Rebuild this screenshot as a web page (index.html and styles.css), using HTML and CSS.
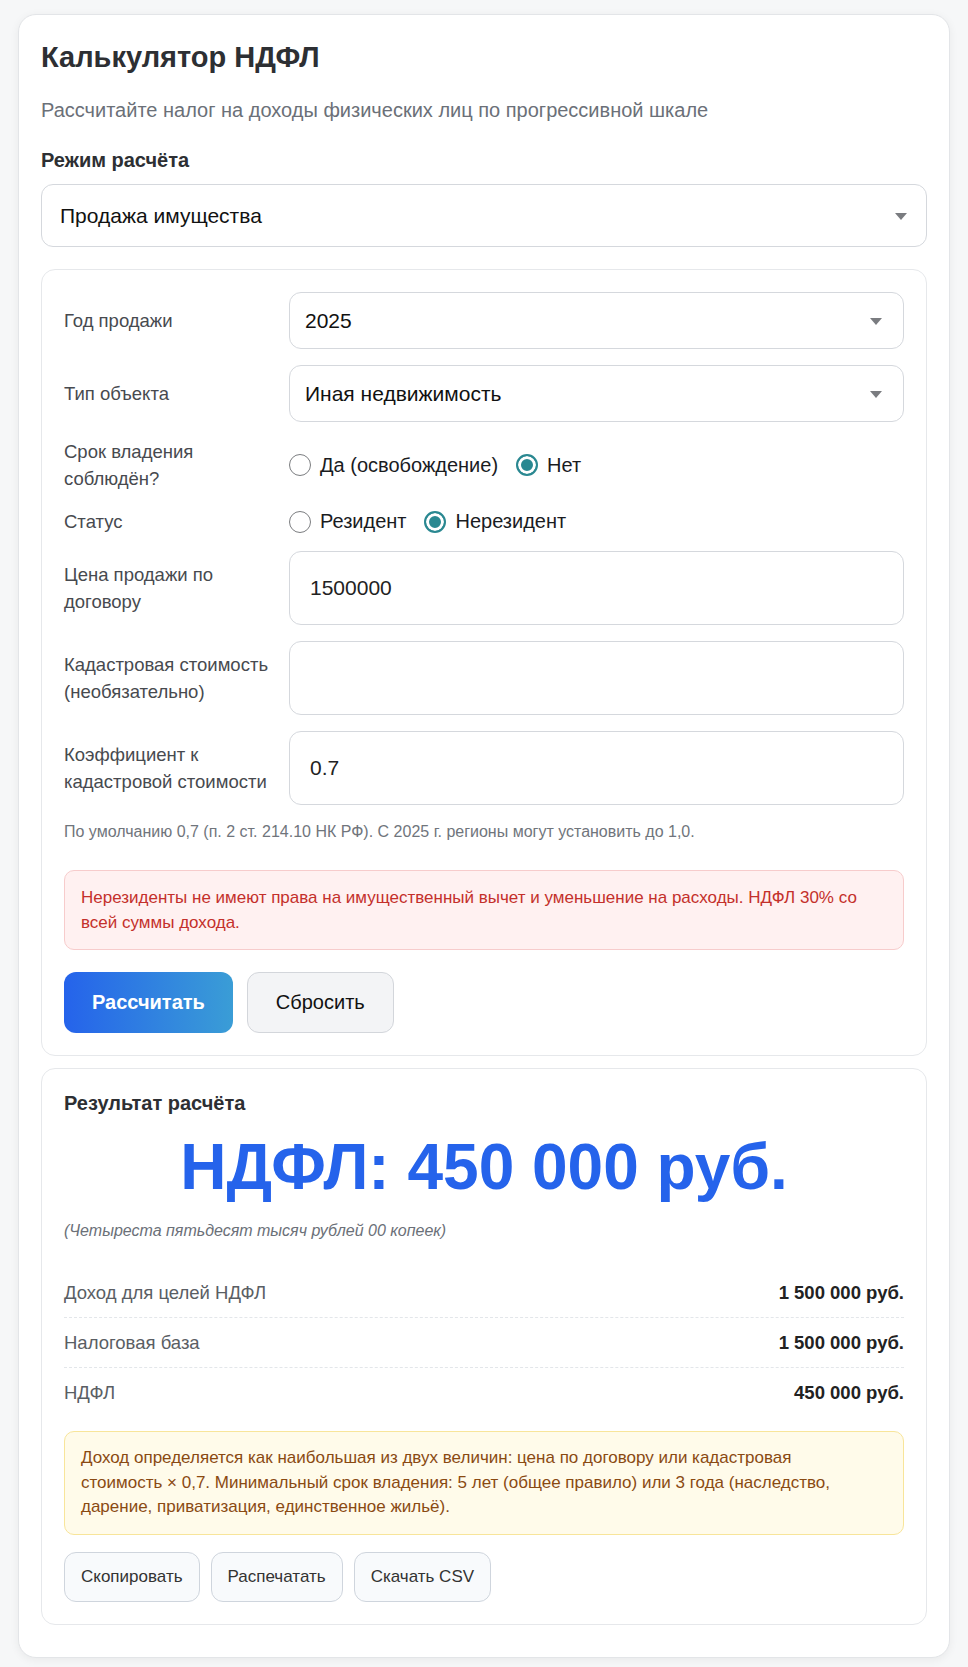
FILE: index.html
```html
<!DOCTYPE html>
<html lang="ru">
<head>
    <meta charset="UTF-8">
    <meta name="viewport" content="width=device-width, initial-scale=1.0">
    <title>Калькулятор НДФЛ</title>
    <link rel="stylesheet" href="styles.css">
</head>
<body>
    <div class="calc">
        <h1>Калькулятор НДФЛ</h1>
        <p class="subtitle">Рассчитайте налог на доходы физических лиц по прогрессивной шкале</p>

        <label class="mode-label" for="mode">Режим расчёта</label>
        <div class="select select-lg">
            <select id="mode">
                <option>Продажа имущества</option>
                <option>Зарплата</option>
            </select>
        </div>

        <div class="panel">
            <div class="row">
                <label for="year">Год продажи</label>
                <div class="select">
                    <select id="year">
                        <option>2025</option>
                        <option>2024</option>
                    </select>
                </div>
            </div>
            <div class="row">
                <label for="objType">Тип объекта</label>
                <div class="select">
                    <select id="objType">
                        <option>Иная недвижимость</option>
                        <option>Квартира</option>
                    </select>
                </div>
            </div>
            <div class="row">
                <span class="row-label">Срок владения соблюдён?</span>
                <div class="radios">
                    <label class="radio"><input type="radio" name="term"> Да (освобождение)</label>
                    <label class="radio"><input type="radio" name="term" checked> Нет</label>
                </div>
            </div>
            <div class="row">
                <span class="row-label">Статус</span>
                <div class="radios">
                    <label class="radio"><input type="radio" name="status"> Резидент</label>
                    <label class="radio"><input type="radio" name="status" checked> Нерезидент</label>
                </div>
            </div>
            <div class="row">
                <label for="price">Цена продажи по договору</label>
                <input type="text" id="price" class="field" value="1500000">
            </div>
            <div class="row">
                <label for="cadastral">Кадастровая стоимость (необязательно)</label>
                <input type="text" id="cadastral" class="field">
            </div>
            <div class="row">
                <label for="coef">Коэффициент к кадастровой стоимости</label>
                <input type="text" id="coef" class="field" value="0.7">
            </div>
            <p class="hint">По умолчанию 0,7 (п. 2 ст. 214.10 НК РФ). С 2025 г. регионы могут установить до 1,0.</p>

            <div class="alert alert-error">Нерезиденты не имеют права на имущественный вычет и уменьшение на расходы. НДФЛ 30% со всей суммы дохода.</div>

            <div class="actions">
                <button class="btn btn-primary">Рассчитать</button>
                <button class="btn btn-light">Сбросить</button>
            </div>
        </div>

        <div class="panel result">
            <h3>Результат расчёта</h3>
            <div class="total">НДФЛ: 450 000 руб.</div>
            <p class="in-words">(Четыреста пятьдесят тысяч рублей 00 копеек)</p>

            <div class="lines">
                <div class="line"><span>Доход для целей НДФЛ</span><b>1 500 000 руб.</b></div>
                <div class="line"><span>Налоговая база</span><b>1 500 000 руб.</b></div>
                <div class="line"><span>НДФЛ</span><b>450 000 руб.</b></div>
            </div>

            <div class="alert alert-note">Доход определяется как наибольшая из двух величин: цена по договору или кадастровая стоимость × 0,7. Минимальный срок владения: 5 лет (общее правило) или 3 года (наследство, дарение, приватизация, единственное жильё).</div>

            <div class="tools">
                <button class="btn-small">Скопировать</button>
                <button class="btn-small">Распечатать</button>
                <button class="btn-small">Скачать CSV</button>
            </div>
        </div>
    </div>
</body>
</html>
```

FILE: styles.css
```css
body {
    margin: 0;
    background: #f6f7f8;
    font-family: "Liberation Sans", Arial, sans-serif;
    color: #222;
}
.calc {
    box-sizing: border-box;
    width: 932px;
    margin: 14px auto 10px;
    padding: 22px 22px 32px;
    background: #fff;
    border: 1px solid #e3e5e8;
    border-radius: 18px;
    box-shadow: 0 2px 10px rgba(0, 0, 0, 0.06);
}
h1 {
    margin: 3px 0 0;
    font-size: 29px;
    line-height: 34px;
    color: #2d2f33;
}
.subtitle {
    margin: 24px 0 0;
    font-size: 20px;
    line-height: 25px;
    color: #6b7078;
}
.mode-label {
    display: block;
    margin-top: 25px;
    font-size: 20px;
    font-weight: bold;
    line-height: 25px;
    color: #2d2f33;
}

/* selects with a drawn triangle instead of the native arrow */
.select {
    position: relative;
}
.select select {
    appearance: none;
    -webkit-appearance: none;
    width: 100%;
    height: 57px;
    box-sizing: border-box;
    padding: 0 40px 0 15px;
    border: 1px solid #d5d8dd;
    border-radius: 12px;
    background: #fff;
    font-family: inherit;
    font-size: 21px;
    color: #111;
}
.select::after {
    content: "";
    position: absolute;
    right: 22px;
    top: 50%;
    margin-top: -3px;
    border-left: 6px solid transparent;
    border-right: 6px solid transparent;
    border-top: 7px solid #7a7c80;
}
.select-lg {
    margin-top: 11px;
}
.select-lg select {
    height: 63px;
    padding-left: 18px;
}
.select-lg::after {
    right: 20px;
}

.panel {
    margin-top: 22px;
    padding: 22px;
    border: 1px solid #e6e8eb;
    border-radius: 14px;
    background: #fff;
}
.row {
    display: grid;
    grid-template-columns: 209px 1fr;
    column-gap: 16px;
    align-items: center;
    margin-bottom: 16px;
}
.row > label,
.row-label {
    font-size: 18.5px;
    line-height: 27px;
    color: #474a4f;
}
.radios {
    display: flex;
    gap: 18px;
}
.radio {
    display: flex;
    align-items: center;
    gap: 9px;
    font-size: 20px;
    color: #1a1c1f;
}
.radio input {
    appearance: none;
    -webkit-appearance: none;
    width: 22px;
    height: 22px;
    margin: 0;
    border: 1.5px solid #7b7d80;
    border-radius: 50%;
    background: #fff;
}
.radio input:checked {
    border: 2px solid #2a8891;
    background: #2a8891;
    box-shadow: inset 0 0 0 3px #fff;
}
.field {
    box-sizing: border-box;
    width: 100%;
    height: 74px;
    padding: 0 20px;
    border: 1px solid #d5d8dd;
    border-radius: 12px;
    font-family: inherit;
    font-size: 21px;
    color: #222;
}
.hint {
    margin: 0;
    font-size: 16px;
    line-height: 21px;
    color: #70757c;
}
.alert {
    padding: 14px 16px;
    border-radius: 10px;
    font-size: 17px;
    line-height: 25px;
}
.alert-error {
    margin-top: 28px;
    background: #fff1f1;
    border: 1px solid #f7cccc;
    color: #c4302b;
}
.alert-note {
    margin-top: 14px;
    padding-right: 40px;
    background: #fffbea;
    border: 1px solid #f8e59a;
    color: #8a4a12;
    line-height: 24.5px;
}

.actions {
    display: flex;
    gap: 14px;
    margin-top: 22px;
}
.btn {
    height: 61px;
    padding: 0 28px;
    border-radius: 12px;
    font-family: inherit;
    font-size: 20px;
    cursor: pointer;
}
.btn-primary {
    border: none;
    background: linear-gradient(90deg, #2563eb, #3a9dd6);
    color: #fff;
    font-weight: bold;
}
.btn-light {
    border: 1px solid #d3d6db;
    background: #f3f4f6;
    color: #111;
}

.result {
    margin-top: 12px;
}
.result h3 {
    margin: 0;
    font-size: 20px;
    line-height: 25px;
    color: #2d2f33;
}
.total {
    margin-top: 13px;
    text-align: center;
    font-size: 64px;
    font-weight: bold;
    line-height: 77px;
    color: #2563eb;
}
.in-words {
    margin: 14px 0 27px;
    font-size: 16px;
    font-style: italic;
    line-height: 21px;
    color: #6b7078;
}
.line {
    display: flex;
    justify-content: space-between;
    padding: 12px 0;
    border-bottom: 1px dashed #e3e6ea;
    font-size: 18.5px;
    line-height: 25px;
}
.line:last-child {
    border-bottom: none;
}
.line span {
    color: #5a5e64;
}
.line b {
    color: #222;
}
.tools {
    display: flex;
    gap: 11px;
    margin-top: 17px;
}
.btn-small {
    height: 50px;
    padding: 0 16px;
    border: 1px solid #cfd5dd;
    border-radius: 12px;
    background: #f8fafc;
    font-family: inherit;
    font-size: 17px;
    color: #333;
    cursor: pointer;
}
```
